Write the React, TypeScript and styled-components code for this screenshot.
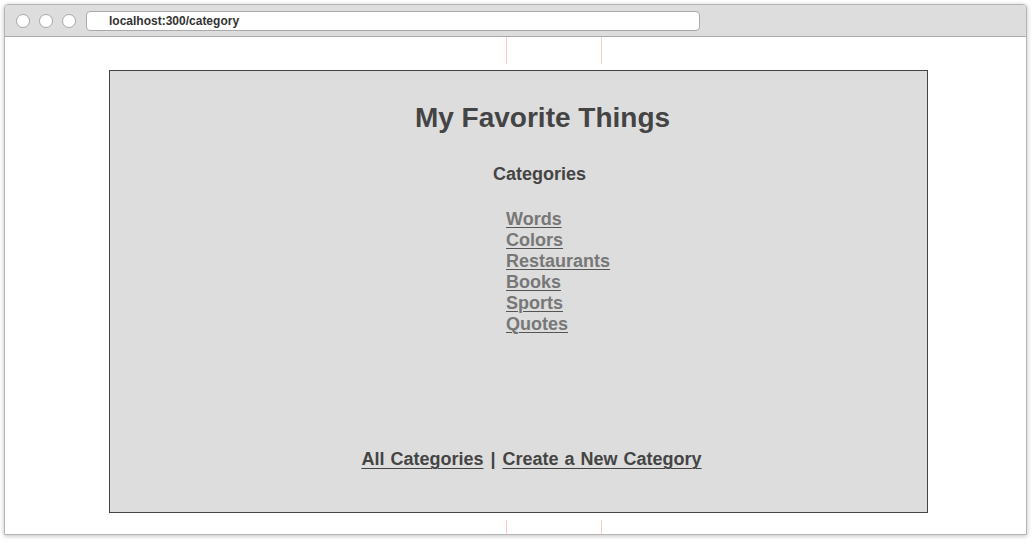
import React from "react";
import styled, { createGlobalStyle } from "styled-components";

const Global = createGlobalStyle`
  html, body { margin: 0; padding: 0; background: #ffffff; }
  body { font-family: "Liberation Sans", Arial, Helvetica, sans-serif; }
  * { box-sizing: border-box; }
`;

const Screen = styled.div`
  width: 1036px;
  height: 541px;
  padding: 4px 0 0 4px;
  overflow: hidden;
`;

const Window = styled.div`
  width: 1023px;
  height: 531px;
  display: flex;
  flex-direction: column;
  border: 1px solid #b4b4b4;
  border-radius: 4px 4px 0 0;
  background: #ffffff;
  box-shadow: 0 1px 5px rgba(0, 0, 0, 0.25);
  overflow: hidden;
`;

const TitleBar = styled.div`
  height: 32px;
  flex: none;
  display: flex;
  align-items: center;
  gap: 9px;
  padding: 0 0 0 11px;
  background: #dddddd;
  border-bottom: 1px solid #aaaaaa;
`;

const Light = styled.span`
  width: 14px;
  height: 14px;
  border-radius: 50%;
  background: #ffffff;
  border: 1px solid #a8a8a8;
  flex: none;
  margin-top: 1px;
`;

const UrlBar = styled.div`
  margin-left: 1px;
  width: 614px;
  height: 20px;
  margin-top: 1px;
  display: flex;
  align-items: center;
  padding-left: 22px;
  background: #ffffff;
  border: 1px solid #aaaaaa;
  border-radius: 4px;
  font-size: 12px;
  font-weight: bold;
  color: #333333;
`;

const Page = styled.div`
  position: relative;
  flex: 1;
  padding: 33px 0 0 104px;
  background: #ffffff;
`;

const Guide = styled.span<{ $x: number; $top: number; $h: number }>`
  position: absolute;
  left: ${(p) => p.$x}px;
  top: ${(p) => p.$top}px;
  width: 1px;
  height: ${(p) => p.$h}px;
  background: #f7cfc6;
`;

const Card = styled.main`
  width: 819px;
  height: 443px;
  display: flex;
  flex-direction: column;
  align-items: center;
  padding: 31px 0 42px 42px;
  background: #dddddd;
  border: 1px solid #444444;
  color: #444444;
`;

const Title = styled.h1`
  margin: 0 0 30px;
  padding-left: 6px;
  font-size: 28px;
  line-height: 32px;
  font-weight: bold;
`;

const Subtitle = styled.h2`
  margin: 0 0 24px;
  font-size: 18px;
  line-height: 21px;
  font-weight: bold;
`;

const List = styled.ul`
  list-style: none;
  margin: 0;
  padding: 0 0 0 40px;
  width: 147px;
  text-align: left;
`;

const Item = styled.li`
  font-size: 18px;
  line-height: 21px;
`;

const Link = styled.a<{ $dark?: boolean }>`
  font-weight: bold;
  color: ${(p) => (p.$dark ? "#444444" : "#777777")};
  text-decoration: underline;
  text-decoration-color: ${(p) => (p.$dark ? "#444444" : "#555555")};
  text-decoration-thickness: 1px;
  text-underline-offset: ${(p) => (p.$dark ? 3 : 2)}px;
  cursor: pointer;
`;

const Footer = styled.nav`
  margin-top: auto;
  padding-right: 16px;
  font-size: 18px;
  line-height: 21px;
  font-weight: bold;
  color: #444444;
  word-spacing: 1px;
`;

const Separator = styled.span`
  margin: 0 1px;
`;

const categories = ["Words", "Colors", "Restaurants", "Books", "Sports", "Quotes"];

export default function App() {
  return (
    <>
      <Global />
      <Screen>
        <Window>
          <TitleBar>
            <Light />
            <Light />
            <Light />
            <UrlBar>localhost:300/category</UrlBar>
          </TitleBar>
          <Page>
            <Guide $x={501} $top={0} $h={27} />
            <Guide $x={596} $top={0} $h={27} />
            <Guide $x={501} $top={483} $h={16} />
            <Guide $x={596} $top={483} $h={16} />
            <Card>
              <Title>My Favorite Things</Title>
              <Subtitle>Categories</Subtitle>
              <List>
                {categories.map((c) => (
                  <Item key={c}>
                    <Link href="#">{c}</Link>
                  </Item>
                ))}
              </List>
              <Footer>
                <Link $dark href="#">All Categories</Link> <Separator>|</Separator>{" "}
                <Link $dark href="#">Create a New Category</Link>
              </Footer>
            </Card>
          </Page>
        </Window>
      </Screen>
    </>
  );
}
